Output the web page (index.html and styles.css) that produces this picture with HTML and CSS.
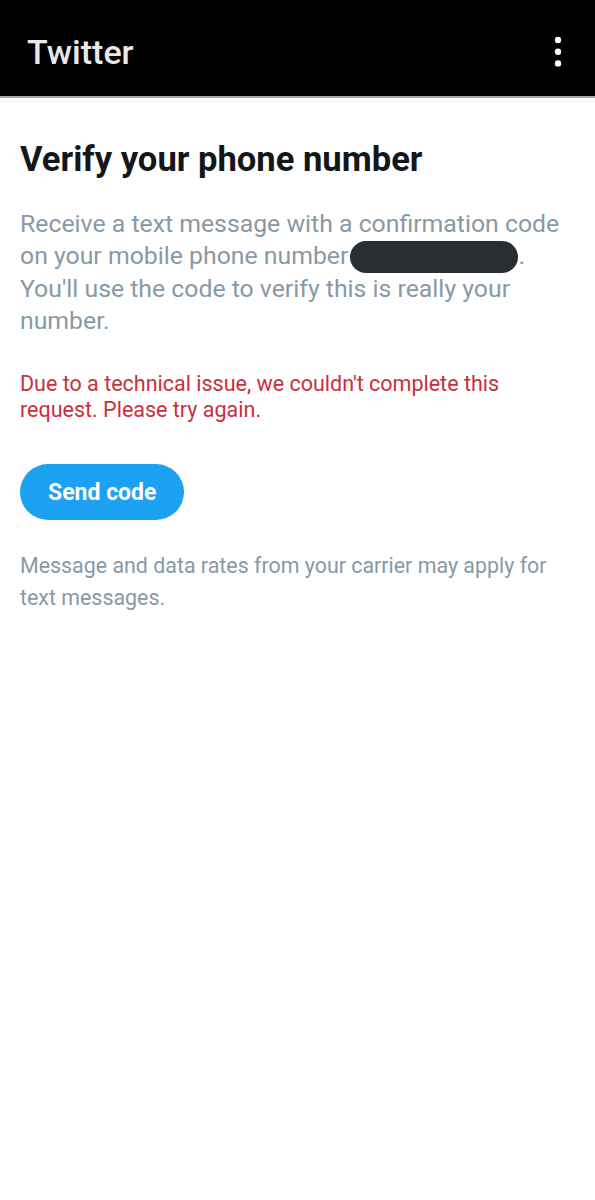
FILE: index.html
```html
<!DOCTYPE html>
<html lang="en">
<head>
    <meta charset="UTF-8">
    <title>Twitter</title>
    <link rel="stylesheet" href="styles.css">
</head>
<body>

<div class="toolbar">
    <span class="toolbarTitle">Twitter</span>
    <button class="menuButton" aria-label="More options">
        <svg width="8" height="32" viewBox="0 0 8 32">
            <circle cx="4" cy="4" r="3.2" fill="#fff"/>
            <circle cx="4" cy="15.7" r="3.2" fill="#fff"/>
            <circle cx="4" cy="27.4" r="3.2" fill="#fff"/>
        </svg>
    </button>
</div>

<div class="content">
    <h1 class="pageTitle">Verify your phone number</h1>

    <p class="description">
        Receive a text message with a confirmation code on your mobile phone number<span class="redacted"></span>.
        You'll use the code to verify this is really your number.
    </p>

    <p class="errorText">Due to a technical issue, we couldn't complete this request. Please try again.</p>

    <button class="sendButton">Send code</button>

    <p class="note">Message and data rates from your carrier may apply for text messages.</p>
</div>

</body>
</html>
```

FILE: styles.css
```css
html, body {
    margin: 0;
    padding: 0;
}

body {
    font-family: Roboto, 'Noto Sans', sans-serif;
    background-color: #ffffff;
    width: 595px;
}

.toolbar {
    height: 98px;
    background-color: #000000;
    border-bottom: 2px solid #a8a8a8;
    display: flex;
    align-items: center;
    justify-content: space-between;
    padding: 0 33px 0 27px;
    box-sizing: border-box;
}

.toolbarTitle {
    color: #e8e8e8;
    font-size: 34px;
    font-weight: 500;
    margin-top: 8px;
}

.menuButton {
    background: none;
    border: 0;
    padding: 0;
    margin-top: 7px;
    display: flex;
    cursor: pointer;
}

.content {
    padding: 0 20px;
}

.pageTitle {
    margin: 38px 0 0;
    font-size: 34.6px;
    font-weight: 700;
    line-height: 46px;
    color: #14171a;
}

.description {
    margin: 26px 0 0;
    font-size: 24.8px;
    line-height: 32px;
    color: #8899a6;
}

.redacted {
    display: inline-block;
    width: 168px;
    height: 32px;
    margin-left: 2px;
    border-radius: 16px;
    background-color: #2a2d31;
    vertical-align: -9px;
}

.errorText {
    margin: 34px 0 0;
    font-size: 21.5px;
    line-height: 26px;
    color: #c9303a;
}

.sendButton {
    margin-top: 41px;
    height: 56px;
    padding: 0 28px;
    border: 0;
    border-radius: 28px;
    background-color: #1da1f2;
    color: #ffffff;
    font-family: Roboto, sans-serif;
    font-size: 23px;
    font-weight: 700;
    cursor: pointer;
}

.note {
    margin: 30px 0 0;
    font-size: 21.4px;
    line-height: 32px;
    color: #8899a6;
}
```
